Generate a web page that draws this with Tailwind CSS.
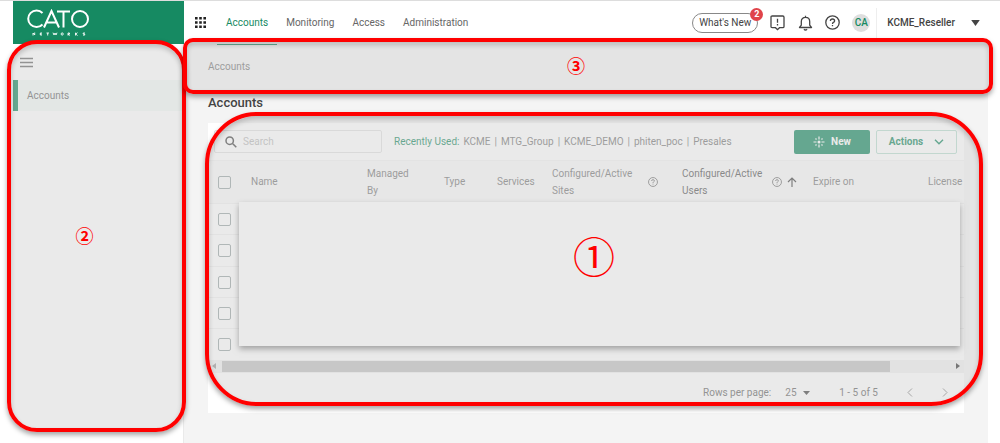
<!DOCTYPE html>
<html lang="en">
<head>
<meta charset="utf-8">
<meta name="viewport" content="width=device-width, initial-scale=1">
<title>Accounts</title>
<script src="https://cdn.jsdelivr.net/npm/@tailwindcss/browser@4"></script>
</head>
<body class="bg-white font-[Roboto,'Liberation_Sans','Noto_Sans_CJK_JP',sans-serif] text-[10px] leading-4 text-[#666]">
<div class="relative flex min-h-screen flex-col border-t border-[#ddd]">
  <div class="ml-[13px] mr-3 flex grow">

    <aside class="flex w-[171px] shrink-0 flex-col border-r border-[#eaeaea] bg-white">
      <a href="#" aria-label="Cato Networks" class="-mr-px flex h-[43px] items-start bg-[#168a62] pl-[14px] pt-2">
        <svg width="64" height="28" viewBox="0 0 64 28" fill="none" stroke="#fff" stroke-width="2">
          <path d="M15.500 4A8.300 8.300 0 1 0 15.500 15.500M17 18.500L24.500 2L32 18.500M20 13.500H29.500M30 2.500H43M36.500 2V18.500"/>
          <circle cx="53" cy="10" r="8"/>
          <path stroke-width=".9" d="M6 26.500V24L7.700 26V23.500M15 24H13.300V26H15M13.300 25H14.700M19.500 24H22M20.700 24V26.500M26 23.700L27 26L28 24L29 26L30 23.700M41 26.500V24H42.500V25.200H41L42.700 26.500M48.500 23.700V26.500M50.500 23.700L48.700 25L50.500 26.500M58 24H56.200V25H57.700V26.100H56"/>
          <circle cx="35.200" cy="25" r="1.100" stroke-width=".9"/>
        </svg>
      </a>
      <button type="button" aria-label="Toggle menu" class="flex h-9 items-center pl-[7px]">
        <svg width="13" height="11" viewBox="0 0 13 11" stroke="#666" stroke-width="1.300"><path d="M0 1.500H13M0 5.500H13M0 9.500H13"/></svg>
      </button>
      <nav aria-label="Sidebar">
        <a href="#" class="flex h-[31px] items-center border-l-5 border-[#168a62] bg-[#f3faf7] pl-[9px]">Accounts</a>
      </nav>
    </aside>

    <div class="flex min-w-0 grow flex-col bg-[#f4f4f4]">
      <header class="flex h-[43px] shrink-0 items-center bg-white pl-[11px] pr-2">
        <button type="button" aria-label="Apps">
          <svg width="11" height="11" viewBox="0 0 11 11" fill="#222"><path d="M0 0h2.600v2.600H0zM4.200 0h2.600v2.600H4.200zM8.400 0H11v2.600H8.400zM0 4.200h2.600v2.600H0zM4.200 4.200h2.600v2.600H4.200zM8.400 4.200H11v2.600H8.400zM0 8.400h2.600V11H0zM4.200 8.400h2.600V11H4.200zM8.400 8.400H11V11H8.400z"/></svg>
        </button>
        <nav aria-label="Main" class="flex h-full grow pl-[11px]">
          <a href="#" class="flex items-center px-[9px] text-[#168a62] shadow-[0_1px_0_#168a62]">Accounts</a>
          <a href="#" class="flex items-center px-[9px]">Monitoring</a>
          <a href="#" class="flex items-center px-[9px]">Access</a>
          <a href="#" class="flex items-center px-[9px]">Administration</a>
        </nav>
        <div class="flex items-center">
          <button type="button" class="relative mr-3 flex h-5 items-center rounded-full border border-[#888] px-1.5 text-[#444]">What's New
            <span class="absolute -right-1.5 -top-1.5 flex size-[13px] items-center justify-center rounded-full bg-[#e0434a] text-[9px] font-bold text-white">2</span>
          </button>
          <button type="button" aria-label="Messages" class="mr-[13px]">
            <svg width="15" height="16" viewBox="0 0 15 16" fill="none" stroke="#444" stroke-width="1.300"><path d="M2.200 1H12.800Q14 1 14 2.200V11.500Q14 12.700 12.800 12.700H9.500L7.500 14.700L5.500 12.700H2.200Q1 12.700 1 11.500V2.200Q1 1 2.200 1ZM7.500 3.800V7.700M7.500 9V10.500"/></svg>
          </button>
          <button type="button" aria-label="Notifications" class="mr-3">
            <svg width="15" height="16" viewBox="0 0 15 16" fill="none" stroke="#444" stroke-width="1.300" stroke-linejoin="round"><path d="M1.500 12.500L3.300 10.200V6.500C3.300 4 5 2.400 7.500 2.400S11.700 4 11.700 6.500V10.200L13.500 12.500ZM7.500 2.400V.7M5.900 14.300Q7.500 15.800 9.100 14.300"/></svg>
          </button>
          <button type="button" aria-label="Help" class="mr-3">
            <svg width="15" height="15" viewBox="0 0 15 15" fill="none" stroke="#444" stroke-width="1.300"><circle cx="7.500" cy="7.500" r="6.700"/><path d="M5.400 6Q5.400 4 7.500 4T9.600 5.900Q9.600 6.800 8.300 7.400Q7.500 7.900 7.500 9M7.500 10V11.300"/></svg>
          </button>
          <button type="button" class="mr-1.5 flex size-[18px] items-center justify-center rounded-full bg-[#dedede] font-medium text-[#168a62]">CA</button>
          <button type="button" class="flex h-[30px] items-center gap-4 border-l border-[#eee] pl-[10px] font-medium text-[#444]">KCME_Reseller
            <svg width="9" height="6" viewBox="0 0 10 7" fill="#444"><path d="M0 0H10L5 7Z"/></svg>
          </button>
        </div>
      </header>

      <main class="flex flex-col pb-7 pl-6 pr-6">
        <nav aria-label="Breadcrumb" class="flex h-[45px] items-center text-[#777]"><a href="#">Accounts</a></nav>
        <h1 class="mt-[6px] flex h-4 items-center text-[13px] font-medium text-[#444]">Accounts</h1>

        <section class="mt-3 bg-white">
          <div class="flex h-[37px] items-center pl-[6px] pr-[7px]">
            <label class="flex h-[23px] w-[168px] items-center gap-[6px] rounded-xs border border-[#e2e2e2] pl-[10px]">
              <svg class="shrink-0" width="12" height="12" viewBox="0 0 12 12" fill="none" stroke="#444" stroke-width="1.500"><circle cx="4.700" cy="4.700" r="3.700"/><path d="M7.500 7.500L11.300 11.300"/></svg>
              <input type="search" aria-label="Search" placeholder="Search" class="w-full min-w-0 bg-transparent outline-none placeholder:text-[#bbb]">
            </label>
            <div class="ml-3 flex grow items-center gap-1 whitespace-nowrap text-[#777]">
              <span class="text-[#168a62]">Recently Used:</span>
              <a href="#">KCME</a><span>|</span><a href="#">MTG_Group</a><span>|</span><a href="#">KCME_DEMO</a><span>|</span><a href="#">phiten_poc</a><span>|</span><a href="#">Presales</a>
            </div>
            <button type="button" class="mr-[6px] flex h-6 w-[76px] items-center justify-center gap-1.5 rounded-xs bg-[#168a62] font-bold text-white">
              <svg width="12" height="12" viewBox="0 0 12 12" stroke="#fff" stroke-width="1.200"><circle cx="6" cy="6" r="1.500" fill="#fff" stroke="none"/><path d="M6 .5V3.500M6 8.500V11.500M.5 6H3.500M8.500 6H11.500M2.500 2.500L3.500 3.500M8.500 8.500L9.500 9.500M9.500 2.500L8.500 3.500M3.500 8.500L2.500 9.500"/></svg>
              New
            </button>
            <button type="button" class="flex h-6 w-[81px] items-center justify-center gap-[11px] rounded-xs border border-[#b9ddd0] font-bold text-[#168a62]">Actions
              <svg width="10" height="6" viewBox="0 0 10 6" fill="none" stroke="#168a62" stroke-width="1.400"><path d="M1 .8L5 4.800L9 .8"/></svg>
            </button>
          </div>

          <div class="relative">
            <table class="w-full table-fixed border-collapse text-left text-[#777]">
              <colgroup><col class="w-[43px]"><col class="w-[116px]"><col class="w-[77px]"><col class="w-[53px]"><col class="w-[55px]"><col class="w-[130px]"><col class="w-[131px]"><col><col class="w-[36px]"></colgroup>
              <thead>
                <tr class="h-[43px] border-t border-[#f3f3f3] bg-[#fafafa]">
                  <th class="pl-[10px]"><input type="checkbox" aria-label="Select all accounts" class="block size-[13px] appearance-none rounded-xs border border-[#9aa5a5]"></th>
                  <th class="font-normal">Name</th>
                  <th class="font-normal leading-[17px]">Managed<br>By</th>
                  <th class="font-normal">Type</th>
                  <th class="font-normal">Services</th>
                  <th class="font-normal leading-[17px]"><div class="flex items-center justify-between pr-6"><span>Configured/Active<br>Sites</span>
                    <svg width="10" height="10" viewBox="0 0 15 15" fill="none" stroke="#666" stroke-width="1.300"><circle cx="7.500" cy="7.500" r="6.700"/><path d="M5.400 6Q5.400 4 7.500 4T9.600 5.900Q9.600 6.800 8.300 7.400Q7.500 7.900 7.500 9M7.500 10V11.300"/></svg></div></th>
                  <th class="font-normal leading-[17px]" aria-sort="ascending"><div class="flex items-center pr-4 text-[#555]"><span class="grow">Configured/Active<br>Users</span>
                    <svg class="mr-[5px]" width="10" height="10" viewBox="0 0 15 15" fill="none" stroke="#666" stroke-width="1.300"><circle cx="7.500" cy="7.500" r="6.700"/><path d="M5.400 6Q5.400 4 7.500 4T9.600 5.900Q9.600 6.800 8.300 7.400Q7.500 7.900 7.500 9M7.500 10V11.300"/></svg>
                    <svg width="10" height="10" viewBox="0 0 10 10" fill="none" stroke="#444" stroke-width="1.200"><path d="M5 10V1M1 5L5 1L9 5"/></svg></div></th>
                  <th class="font-normal">Expire on</th>
                  <th class="font-normal">License</th>
                </tr>
              </thead>
              <tbody>
                <tr class="h-[31px] border-t border-[#f1f1f1]"><td class="pl-[10px]"><input type="checkbox" aria-label="Select row 1" class="block size-[13px] appearance-none rounded-xs border border-[#9aa5a5]"></td><td colspan="8"></td></tr>
                <tr class="h-[32px] border-t border-[#f1f1f1]"><td class="pl-[10px]"><input type="checkbox" aria-label="Select row 2" class="block size-[13px] appearance-none rounded-xs border border-[#9aa5a5]"></td><td colspan="8"></td></tr>
                <tr class="h-[31px] border-t border-[#f1f1f1]"><td class="pl-[10px]"><input type="checkbox" aria-label="Select row 3" class="block size-[13px] appearance-none rounded-xs border border-[#9aa5a5]"></td><td colspan="8"></td></tr>
                <tr class="h-[31px] border-t border-[#f1f1f1]"><td class="pl-[10px]"><input type="checkbox" aria-label="Select row 4" class="block size-[13px] appearance-none rounded-xs border border-[#9aa5a5]"></td><td colspan="8"></td></tr>
                <tr class="h-[31px] border-t border-[#f1f1f1]"><td class="pl-[10px]"><input type="checkbox" aria-label="Select row 5" class="block size-[13px] appearance-none rounded-xs border border-[#9aa5a5]"></td><td colspan="8"></td></tr>
              </tbody>
            </table>
            <!-- Panel that hides the customer data -->
            <div class="absolute bottom-[14px] left-[31px] right-1 top-[42px] bg-white shadow-[0_3px_6px_rgba(0,0,0,0.5)]"></div>
          </div>

          <div class="flex h-[13px] items-center bg-[#f1f1f1] px-1">
            <svg class="mr-[6px]" width="4" height="6" viewBox="0 0 4 6" fill="#999"><path d="M4 0V6L0 3Z"/></svg>
            <div class="grow"><div class="h-[11px] w-[91%] bg-[#c1c1c1]"></div></div>
            <svg width="4" height="6" viewBox="0 0 4 6" fill="#333"><path d="M0 0V6L4 3Z"/></svg>
          </div>

          <footer class="flex h-10 items-center justify-end pr-4">
            <label for="rows">Rows per page:</label>
            <div class="relative ml-[14px] flex items-center">
              <select id="rows" class="w-[25px] appearance-none bg-transparent outline-none"><option>25</option></select>
              <svg class="pointer-events-none absolute right-0" width="7" height="4" viewBox="0 0 7 4" fill="#444"><path d="M0 0H7L3.500 4Z"/></svg>
            </div>
            <span class="ml-[29px]">1 - 5 of 5</span>
            <button type="button" aria-label="Previous page" class="ml-[29px]"><svg width="6" height="9" viewBox="0 0 6 9" fill="none" stroke="#888"><path d="M5 .5L1 4.500L5 8.500"/></svg></button>
            <button type="button" aria-label="Next page" class="ml-[29px]"><svg width="6" height="9" viewBox="0 0 6 9" fill="none" stroke="#888"><path d="M1 .5L5 4.500L1 8.500"/></svg></button>
          </footer>
        </section>
      </main>
    </div>
  </div>

  <!-- Numbered callouts over the page regions -->
  <div class="pointer-events-none absolute bottom-[11px] left-[7px] top-[39px] flex w-[179px] items-center justify-center rounded-[30px] border-4 border-[#f00] bg-[#cfcfcf]/43 pb-0.5 font-['Noto_Sans_CJK_JP',sans-serif] text-[18px] font-bold text-[#f00] shadow-[0_3px_5px_rgba(0,0,0,0.35),inset_0_3px_5px_rgba(0,0,0,0.2)]"><span class="pr-6">②</span></div>
  <div class="pointer-events-none absolute left-[205px] right-[17px] top-[111px] flex h-[294px] items-center justify-center rounded-[52px] border-4 border-[#f00] bg-[#cfcfcf]/43 pb-2 font-['Noto_Sans_CJK_JP',sans-serif] text-[42px] text-[#f00] shadow-[0_3px_5px_rgba(0,0,0,0.35),inset_0_3px_5px_rgba(0,0,0,0.2)]">①</div>
  <div class="pointer-events-none absolute left-[183px] right-[7px] top-[37px] flex h-[56px] items-center justify-center rounded-[10px] border-4 border-[#f00] bg-[#cfcfcf]/43 pb-0.5 font-['Noto_Sans_CJK_JP',sans-serif] text-[18px] font-bold text-[#f00] shadow-[0_3px_5px_rgba(0,0,0,0.35),inset_0_3px_5px_rgba(0,0,0,0.2)]"><span class="pr-6">③</span></div>
</div>
</body>
</html>
